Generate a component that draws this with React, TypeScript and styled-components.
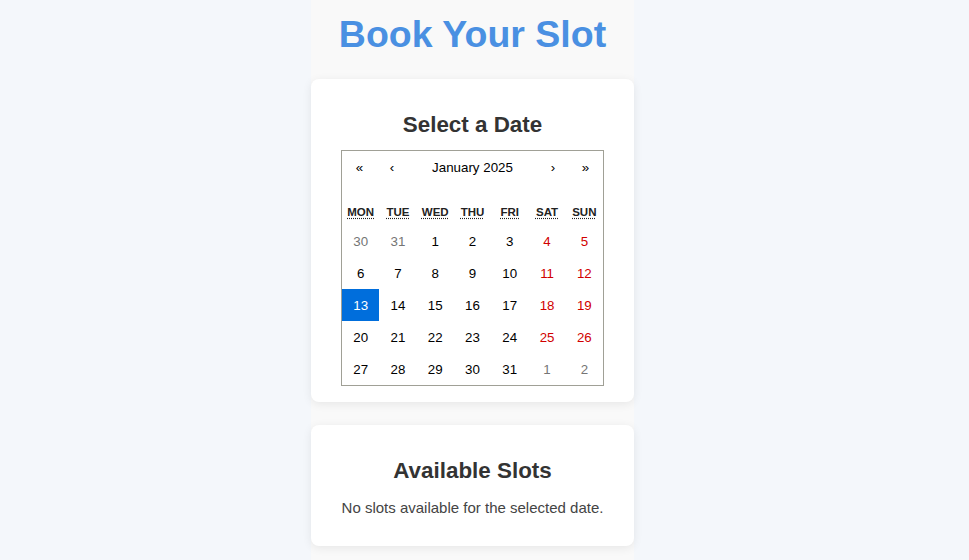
import React from "react";
import styled, { createGlobalStyle } from "styled-components";

const GlobalStyle = createGlobalStyle`
  html, body {
    margin: 0;
    padding: 0;
    background: #f4f7fb;
    font-family: "Liberation Sans", Arial, Helvetica, sans-serif;
  }
  * { box-sizing: border-box; }
`;

const Page = styled.div`
  display: flex;
  justify-content: center;
  padding-right: 24px;
  min-height: 100vh;
`;

const Container = styled.div`
  width: 323px;
  background: #f9f9f9;
  display: flex;
  flex-direction: column;
  gap: 23px;
  padding-bottom: 20px;
`;

const Title = styled.h1`
  margin: 13px 0 0;
  font-size: 37.5px;
  font-weight: bold;
  color: #4a90e2;
  text-align: center;
  line-height: normal;
  white-space: nowrap;
`;

const Card = styled.section`
  background: #ffffff;
  border-radius: 8px;
  box-shadow: 0 2px 10px rgba(0, 0, 0, 0.08);
  padding: 16px 30px;
  text-align: center;
`;

const CardTitle = styled.h2`
  margin: 17px 0 12px;
  font-size: 22.4px;
  font-weight: bold;
  color: #333333;
  line-height: normal;
`;

const Message = styled.p`
  margin: 15px -10px 14px;
  font-size: 15px;
  color: #444444;
  line-height: normal;
  white-space: nowrap;
`;

const Calendar = styled.div`
  width: 100%;
  border: 1px solid #a0a096;
  background: #ffffff;
  font-family: "Liberation Sans", Arial, Helvetica, sans-serif;
`;

const Nav = styled.div`
  display: flex;
  height: 32px;
  margin-bottom: 16px;
`;

const NavButton = styled.button<{ $w?: number }>`
  flex: ${(p) => (p.$w ? `0 0 ${p.$w}px` : "1 1 auto")};
  margin: 0;
  padding: 0;
  border: 0;
  background: none;
  font-family: "Liberation Sans", Arial, Helvetica, sans-serif;
  font-size: 13.333px;
  color: #000000;
  cursor: pointer;
`;

const Weekdays = styled.div`
  display: grid;
  grid-template-columns: repeat(7, 1fr);
  text-align: center;
  text-transform: uppercase;
  font-weight: bold;
  font-size: 11.5px;
`;

const Weekday = styled.div`
  padding: 6px 0;
  line-height: 14px;
  color: #222222;

  abbr {
    text-decoration: underline dotted;
    text-underline-offset: 2px;
  }
`;

const Days = styled.div`
  display: grid;
  grid-template-columns: repeat(7, 1fr);
`;

const Tile = styled.button<{ $weekend: boolean; $neighbor: boolean; $active: boolean }>`
  margin: 0;
  border: 0;
  padding: 9px 0 7px;
  line-height: 16px;
  text-align: center;
  font-family: "Liberation Sans", Arial, Helvetica, sans-serif;
  font-size: 13.333px;
  cursor: pointer;
  background: ${(p) => (p.$active ? "#006edc" : "none")};
  color: ${(p) =>
    p.$active ? "#ffffff" : p.$neighbor ? "#757575" : p.$weekend ? "#d10000" : "#000000"};
`;

const weekdays = [
  ["MON", "Monday"],
  ["TUE", "Tuesday"],
  ["WED", "Wednesday"],
  ["THU", "Thursday"],
  ["FRI", "Friday"],
  ["SAT", "Saturday"],
  ["SUN", "Sunday"],
];

type Day = { n: number; neighbor: boolean };

const days: Day[] = [
  { n: 30, neighbor: true },
  { n: 31, neighbor: true },
  ...Array.from({ length: 31 }, (_, i) => ({ n: i + 1, neighbor: false })),
  { n: 1, neighbor: true },
  { n: 2, neighbor: true },
];

export default function App() {
  const [selected, setSelected] = React.useState(13);
  return (
    <>
      <GlobalStyle />
      <Page>
        <Container>
          <Title>Book Your Slot</Title>
          <Card>
            <CardTitle>Select a Date</CardTitle>
            <Calendar>
              <Nav>
                <NavButton $w={35}>«</NavButton>
                <NavButton $w={30}>‹</NavButton>
                <NavButton>January 2025</NavButton>
                <NavButton $w={30}>›</NavButton>
                <NavButton $w={35}>»</NavButton>
              </Nav>
              <Weekdays>
                {weekdays.map(([s, l]) => (
                  <Weekday key={s}>
                    <abbr title={l}>{s}</abbr>
                  </Weekday>
                ))}
              </Weekdays>
              <Days>
                {days.map((d, i) => (
                  <Tile
                    key={i}
                    $weekend={i % 7 >= 5}
                    $neighbor={d.neighbor}
                    $active={!d.neighbor && d.n === selected}
                    onClick={() => !d.neighbor && setSelected(d.n)}
                  >
                    {d.n}
                  </Tile>
                ))}
              </Days>
            </Calendar>
          </Card>
          <Card>
            <CardTitle>Available Slots</CardTitle>
            <Message>No slots available for the selected date.</Message>
          </Card>
        </Container>
      </Page>
    </>
  );
}
